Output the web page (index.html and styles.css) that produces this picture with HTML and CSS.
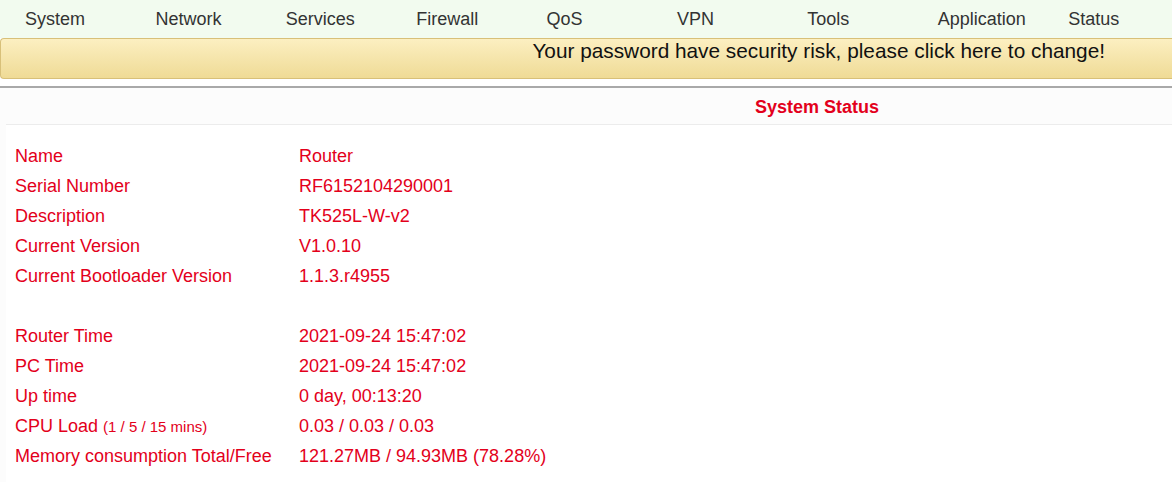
FILE: index.html
```html
<!DOCTYPE html>
<html>
<head>
<meta charset="utf-8">
<title>System Status</title>
<link rel="stylesheet" href="styles.css">
</head>
<body>
<nav class="nav">
  <a class="nav-item">System</a>
  <a class="nav-item">Network</a>
  <a class="nav-item">Services</a>
  <a class="nav-item">Firewall</a>
  <a class="nav-item">QoS</a>
  <a class="nav-item">VPN</a>
  <a class="nav-item">Tools</a>
  <a class="nav-item">Application</a>
  <a class="nav-item">Status</a>
</nav>
<div class="banner">Your password have security risk, please click here to change!</div>
<div class="panel">
  <div class="panel-title">System Status</div>
  <div class="panel-body">
    <div class="row"><span class="label">Name</span><span class="value">Router</span></div>
    <div class="row"><span class="label">Serial Number</span><span class="value">RF6152104290001</span></div>
    <div class="row"><span class="label">Description</span><span class="value">TK525L-W-v2</span></div>
    <div class="row"><span class="label">Current Version</span><span class="value">V1.0.10</span></div>
    <div class="row"><span class="label">Current Bootloader Version</span><span class="value">1.1.3.r4955</span></div>
    <div class="row row-blank"></div>
    <div class="row"><span class="label">Router Time</span><span class="value">2021-09-24 15:47:02</span></div>
    <div class="row"><span class="label">PC Time</span><span class="value">2021-09-24 15:47:02</span></div>
    <div class="row"><span class="label">Up time</span><span class="value">0 day, 00:13:20</span></div>
    <div class="row"><span class="label">CPU Load <small class="hint">(1 / 5 / 15 mins)</small></span><span class="value">0.03 / 0.03 / 0.03</span></div>
    <div class="row"><span class="label">Memory consumption Total/Free</span><span class="value">121.27MB / 94.93MB (78.28%)</span></div>
  </div>
</div>
</body>
</html>
```
FILE: styles.css
```css
html, body {
  margin: 0;
  padding: 0;
  background: #ffffff;
  font-family: "Liberation Sans", Arial, sans-serif;
  overflow: hidden;
}

.nav {
  height: 38px;
  background: #f2fbef;
  display: grid;
  grid-template-columns: repeat(9, 130.4px);
  padding-left: 25px;
  align-items: center;
}

.nav-item {
  font-size: 18px;
  color: #333333;
  line-height: 38px;
  white-space: nowrap;
}

.banner {
  box-sizing: border-box;
  height: 41px;
  border: 1px solid #d8c079;
  border-right: none;
  border-radius: 4px 0 0 4px;
  background: linear-gradient(to bottom, #fcefc1, #efdb96);
  font-size: 20.8px;
  line-height: 23px;
  color: #111111;
  text-align: right;
  padding-right: 67px;
}

.panel {
  margin-top: 7px;
  border-top: 2px solid #a9a9a9;
  background: #fcfcfc;
  padding-left: 6px;
}

.panel-title {
  height: 36px;
  line-height: 38px;
  font-size: 18px;
  font-weight: bold;
  color: #e3001b;
  padding-left: 749px;
  border-bottom: 1px solid #ececec;
}

.panel-body {
  background: #ffffff;
  padding: 16px 0 12px 9px;
}

.row {
  display: flex;
  height: 30px;
  line-height: 30px;
  font-size: 18px;
  color: #e3001b;
}

.label {
  width: 284px;
  flex: none;
  white-space: nowrap;
}

.value {
  white-space: nowrap;
}

.hint {
  font-size: 15px;
}
```
